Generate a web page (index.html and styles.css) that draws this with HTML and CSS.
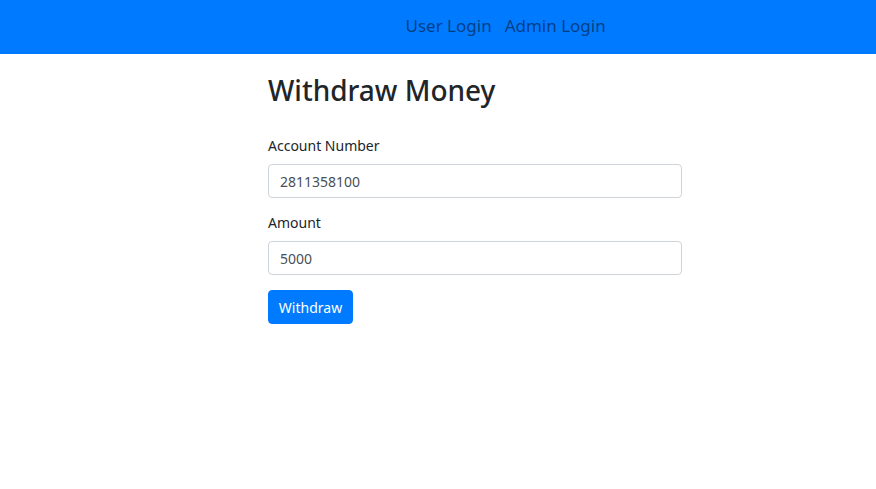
FILE: index.html
```html
<!DOCTYPE html>
<html>
<head>
<meta charset="utf-8">
<link rel="stylesheet" href="styles.css">
</head>
<body>
<nav class="navbar">
  <ul class="nav-links">
    <li><a class="nav-link" href="#">User Login</a></li>
    <li><a class="nav-link" href="#">Admin Login</a></li>
  </ul>
</nav>
<main class="content">
  <h1 class="title">Withdraw Money</h1>
  <form class="form">
    <div class="group">
      <label class="label">Account Number</label>
      <input class="input" type="text" value="2811358100">
    </div>
    <div class="group">
      <label class="label">Amount</label>
      <input class="input" type="text" value="5000">
    </div>
    <button class="btn" type="button">Withdraw</button>
  </form>
</main>
</body>
</html>
```

FILE: styles.css
```css
* { box-sizing: border-box; }
html, body { margin: 0; padding: 0; background: #fff; }
body {
  font-family: "Noto Sans", "Open Sans", sans-serif;
  color: #212529;
}
.navbar {
  background: #007bff;
  height: 54px;
  display: flex;
  align-items: center;
  padding-left: 399px;
  padding-bottom: 2px;
}
.nav-links {
  list-style: none;
  margin: 0;
  padding: 0;
  display: flex;
}
.nav-link {
  display: block;
  padding: 8px 6.5px;
  font-size: 17px;
  color: rgba(0,0,0,0.5);
  text-decoration: none;
  line-height: 24px;
}
.content {
  width: 414px;
  margin-left: 268px;
  padding-top: 16px;
}
.title {
  margin: 0 0 26px;
  font-size: 28px;
  font-weight: 500;
  line-height: 40px;
}
.group { margin-bottom: 15px; }
.label {
  display: block;
  font-size: 14px;
  line-height: 20px;
  margin-bottom: 8px;
}
.input {
  display: block;
  width: 100%;
  height: 34px;
  padding: 4px 11px;
  font: inherit;
  font-size: 14px;
  color: #495057;
  border: 1px solid #ced4da;
  border-radius: 4px;
  background: #fff;
}
.btn {
  display: block;
  height: 34px;
  width: 85px;
  padding: 0;
  font: inherit;
  font-size: 14px;
  font-weight: 400;
  color: #fff;
  background: #007bff;
  border: 1px solid #007bff;
  border-radius: 4px;
}
```
